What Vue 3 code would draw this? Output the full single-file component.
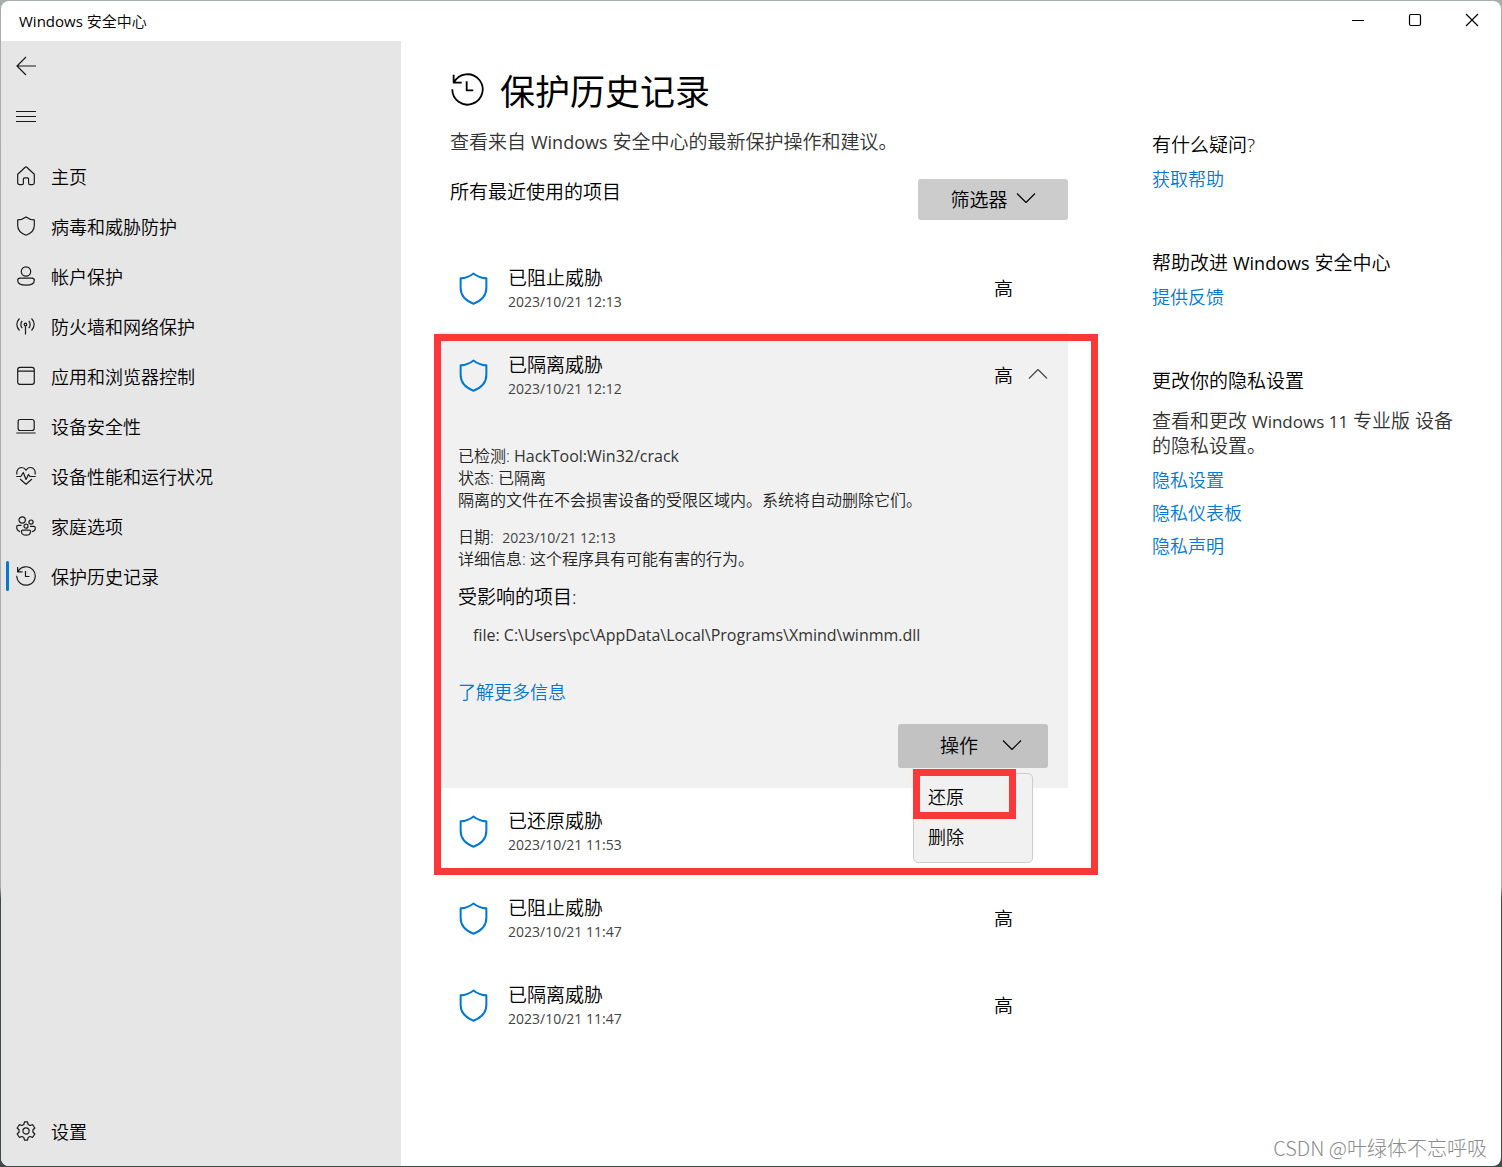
<script setup>
import { ref } from 'vue'

const nav = [
  { icon: 'home', label: '主页' },
  { icon: 'shield', label: '病毒和威胁防护' },
  { icon: 'account', label: '帐户保护' },
  { icon: 'network', label: '防火墙和网络保护' },
  { icon: 'app', label: '应用和浏览器控制' },
  { icon: 'device', label: '设备安全性' },
  { icon: 'health', label: '设备性能和运行状况' },
  { icon: 'family', label: '家庭选项' },
  { icon: 'history', label: '保护历史记录', active: true }
]

const icons = {
  home: 'M1.7 8.2 9.2 1.2Q10 .5 10.8 1.2L18.3 8.2V16.8Q18.3 18.6 16.5 18.6H14Q12.6 18.6 12.6 17.2V13Q12.6 11.8 11.4 11.8H8.6Q7.4 11.8 7.4 13V17.2Q7.4 18.6 6 18.6H3.5Q1.7 18.6 1.7 16.8Z',
  shield: 'M10 .9C12.4 2.7 15.200 3.700 18.300 3.900V9.500C18.300 14 15.500 17.200 10 19.200C4.500 17.200 1.700 14 1.700 9.500V3.900C4.800 3.700 7.600 2.700 10 .9Z',
  account: 'M10 .8A4.700 4.700 0 1 1 10 10.200A4.700 4.700 0 1 1 10 .8ZM4 12.200H16Q18.300 12.200 18.300 14.300C18.300 17.700 14.500 19.200 10 19.200S1.700 17.700 1.700 14.300Q1.700 12.200 4 12.200Z',
  network: 'M9.500 7.200A1.300 1.300 0 1 1 9.500 9.800A1.300 1.300 0 1 1 9.500 7.200ZM9.500 10V18.600M6.200 4.800C4.400 6.800 4.400 10.200 6.200 12.200M12.800 4.800C14.600 6.800 14.600 10.200 12.800 12.200M3.500 2.500C0 6 0 11 3.500 14.500M15.500 2.500C19 6 19 11 15.500 14.500',
  app: 'M4 1.400H16Q18.300 1.400 18.300 3.700V16Q18.300 18.300 16 18.300H4Q1.700 18.300 1.700 16V3.700Q1.700 1.400 4 1.400ZM1.700 5.200H18.300',
  device: 'M4.300 3.500H16Q18.200 3.500 18.200 5.500V12.500Q18.200 14.500 16 14.500H4.300Q2.100 14.500 2.100 12.500V5.500Q2.100 3.500 4.300 3.500ZM.3 17H19.700',
  health: 'M1 8.500C0 4.500 2.500 1.500 5.500 1.500C7.600 1.500 9 2.500 10 4.200C11 2.500 12.400 1.500 14.500 1.500C17.500 1.500 20 4.500 19 8.500M.3 10.500H4.800L7.300 6.500L10 13.500L12.500 8.500L14 10.500H19.700M4 13L10 18.200L16 13',
  family: 'M6.200 .8A3.200 3.200 0 1 1 6.200 7.200A3.200 3.200 0 1 1 6.200 .8ZM15 4A2.100 2.100 0 1 1 15 8.200A2.100 2.100 0 1 1 15 4ZM10 8.200A2 2 0 1 1 10 12.200A2 2 0 1 1 10 8.200ZM5.500 9.400H2.200Q.7 9.400 .7 11C.7 13.700 2 15.200 4.200 15.600M14 10.400H17.700Q19.300 10.400 19.300 12C19.300 14.200 18 15.400 15.800 15.700M6.800 14.200H13.200Q14.500 14.200 14.500 15.400C14.500 18 12.600 19.200 10 19.200S5.500 18 5.500 15.400Q5.500 14.200 6.800 14.200Z',
  history: 'M1.600 1V5.800H6.500M1.900 5.600A9.200 9.200 0 1 1 .8 9.800M9.500 5V10.500H13.500',
  settings: 'M8.500 .8H11.500L12.200 3.500L14 4.500L16.700 3.700L18.800 7L16.900 9V11L18.800 13L16.700 16.300L14 15.500L12.200 16.500L11.500 19.200H8.500L7.800 16.500L6 15.500L3.300 16.300L1.200 13L3.100 11V9L1.200 7L3.300 3.700L6 4.500L7.800 3.500ZM10 6.900A3.100 3.100 0 1 1 10 13.100A3.100 3.100 0 1 1 10 6.900Z'
}

const before = [{ title: '已阻止威胁', time: '2023/10/21 12:13', level: '高' }]
const after = [
  { title: '已阻止威胁', time: '2023/10/21 11:47', level: '高' },
  { title: '已隔离威胁', time: '2023/10/21 11:47', level: '高' }
]
const menuOpen = ref(true)
</script>

<template>
  <div class="desktop">
    <div class="window">
      <header class="titlebar">
        <span class="title"><span class="en">Windows</span> 安全中心</span>
        <div class="controls">
          <button aria-label="最小化"><svg width="14" height="14"><path d="M1 7.500H13" /></svg></button>
          <button aria-label="最大化"><svg width="14" height="14"><rect x="1.500" y="1.500" width="11" height="11" rx="1.500" /></svg></button>
          <button aria-label="关闭"><svg width="14" height="14"><path d="M1 1L13 13M13 1L1 13" /></svg></button>
        </div>
      </header>

      <div class="body">
        <aside class="sidebar">
          <button class="nav-item" aria-label="返回">
            <svg class="icon tool" viewBox="0 0 20 20"><path d="M20 10H1M10 1L1 10L10 19" /></svg>
          </button>
          <button class="nav-item" aria-label="菜单">
            <svg class="icon tool crisp" viewBox="0 0 20 20"><path d="M0 5.500H20M0 10.500H20M0 15.500H20" /></svg>
          </button>
          <nav>
            <a v-for="n in nav" :key="n.icon" href="#" class="nav-item" :class="{ active: n.active }">
              <svg class="icon" viewBox="0 0 20 20"><path :d="icons[n.icon]" /></svg>
              <span>{{ n.label }}</span>
            </a>
          </nav>
          <a href="#" class="nav-item settings">
            <svg class="icon" viewBox="0 0 20 20"><path :d="icons.settings" /></svg>
            <span>设置</span>
          </a>
        </aside>

        <main class="main">
          <section class="content">
            <div class="heading">
              <svg class="heading-icon" viewBox="0 0 20 20"><path :d="icons.history" /></svg>
              <h1>保护历史记录</h1>
            </div>
            <p class="intro">查看来自 <span class="en">Windows</span> 安全中心的最新保护操作和建议。</p>
            <div class="filter-row">
              <h2>所有最近使用的项目</h2>
              <button class="drop filter">
                筛选器<svg class="chevron" viewBox="0 0 20 12"><path d="M1 1.500L10 10.500L19 1.500" /></svg>
              </button>
            </div>

            <div class="list">
              <button v-for="r in before" :key="r.time" class="row">
                <svg class="shield" viewBox="0 0 20 20" preserveAspectRatio="none"><path :d="icons.shield" /></svg>
                <span class="row-text"><span class="row-title">{{ r.title }}</span><span class="time">{{ r.time }}</span></span>
                <span class="level">{{ r.level }}</span>
              </button>

              <div class="group">
                <article class="panel">
                  <button class="row" aria-expanded="true">
                    <svg class="shield" viewBox="0 0 20 20" preserveAspectRatio="none"><path :d="icons.shield" /></svg>
                    <span class="row-text"><span class="row-title">已隔离威胁</span><span class="time">2023/10/21 12:12</span></span>
                    <span class="level">高</span>
                    <svg class="chevron up" viewBox="0 0 20 12"><path d="M1 10.500L10 1.500L19 10.500" /></svg>
                  </button>
                  <div class="details">
                    <p>已检测: <span class="en">HackTool:Win32/crack</span><br>状态: 已隔离<br>隔离的文件在不会损害设备的受限区域内。系统将自动删除它们。</p>
                    <p>日期: &nbsp;<span class="time">2023/10/21 12:13</span><br>详细信息: 这个程序具有可能有害的行为。</p>
                    <h3>受影响的项目:</h3>
                    <p class="file">file: C:\Users\pc\AppData\Local\Programs\Xmind\winmm.dll</p>
                    <a href="#" class="more">了解更多信息</a>
                    <div class="action">
                      <button class="drop act" aria-haspopup="menu" :aria-expanded="menuOpen" @click="menuOpen = !menuOpen">
                        操作<svg class="chevron" viewBox="0 0 20 12"><path d="M1 1.500L10 10.500L19 1.500" /></svg>
                      </button>
                      <div v-if="menuOpen" class="menu" role="menu">
                        <button role="menuitem">还原</button>
                        <button role="menuitem">删除</button>
                        <div class="mark mark-item"></div>
                      </div>
                    </div>
                  </div>
                </article>
                <button class="row">
                  <svg class="shield" viewBox="0 0 20 20" preserveAspectRatio="none"><path :d="icons.shield" /></svg>
                  <span class="row-text"><span class="row-title">已还原威胁</span><span class="time">2023/10/21 11:53</span></span>
                </button>
                <div class="mark mark-group"></div>
              </div>

              <button v-for="r in after" :key="r.title" class="row">
                <svg class="shield" viewBox="0 0 20 20" preserveAspectRatio="none"><path :d="icons.shield" /></svg>
                <span class="row-text"><span class="row-title">{{ r.title }}</span><span class="time">{{ r.time }}</span></span>
                <span class="level">{{ r.level }}</span>
              </button>
            </div>
          </section>

          <aside class="help">
            <section>
              <h2>有什么疑问?</h2>
              <a href="#">获取帮助</a>
            </section>
            <section>
              <h2>帮助改进 <span class="en">Windows</span> 安全中心</h2>
              <a href="#">提供反馈</a>
            </section>
            <section>
              <h2>更改你的隐私设置</h2>
              <p>查看和更改 <span class="en">Windows 11</span> 专业版 设备的隐私设置。</p>
              <a href="#">隐私设置</a>
              <a href="#">隐私仪表板</a>
              <a href="#">隐私声明</a>
            </section>
          </aside>
        </main>
      </div>
      <div class="watermark">CSDN @叶绿体不忘呼吸</div>
    </div>
  </div>
</template>

<style>
body { margin: 0; }
</style>

<style scoped>
* { box-sizing: border-box; }
.desktop {
  min-height: 100vh;
  padding: 1px;
  display: flex;
  background: linear-gradient(#a6afad 0%, #aaaeae 76%, #404b49 77%, #404b49 100%);
  font-family: "Open Sans", "Noto Sans CJK SC", sans-serif;
  font-weight: 350;
  font-size: 19px;
  line-height: 26px;
  color: #000;
}
.window {
  flex: 1;
  min-width: 0;
  display: flex;
  flex-direction: column;
  position: relative;
  background: #fff;
  border-radius: 8px;
  overflow: hidden;
}
h1, h2, h3, p { margin: 0; font-weight: inherit; font-size: inherit; }
button {
  font: inherit;
  color: inherit;
  border: 0;
  padding: 0;
  background: none;
  text-align: left;
}
a { text-decoration: none; color: #0078d4; font-size: 18px; }
svg { flex: none; fill: none; stroke: currentColor; stroke-linejoin: round; }
.en { font-size: 18px; line-height: 16px; font-weight: 400; }

.titlebar {
  height: 40px;
  display: flex;
  align-items: center;
  justify-content: space-between;
  padding-left: 18px;
  font-size: 15px;
}
.titlebar .en { font-size: 15px; }
.controls { display: flex; height: 38px; align-self: flex-start; margin-right: 1px; }
.controls button { width: 57px; display: flex; align-items: center; justify-content: center; }
.controls svg { stroke-width: 1.2; }

.body { flex: 1; display: flex; }
.sidebar {
  width: 400px;
  flex: none;
  background: #e6e6e6;
  display: flex;
  flex-direction: column;
  padding-bottom: 9px;
}
nav { margin-top: 11px; }
.nav-item {
  height: 50px;
  display: flex;
  align-items: center;
  gap: 15px;
  padding-left: 15px;
  font-size: 18px;
  color: #000;
  position: relative;
}
.active::before {
  content: "";
  position: absolute;
  left: 5px;
  top: 9px;
  width: 3px;
  height: 30px;
  border-radius: 2px;
  background: #0078d4;
}
.icon { width: 20px; height: 20px; margin-bottom: 2px; stroke-width: 1.2; color: #1a1a1a; }
.tool { margin-bottom: 0; }
.crisp { stroke-width: 1; }
.settings { margin-top: auto; }

.main {
  flex: 1;
  min-width: 0;
  display: grid;
  grid-template-columns: minmax(0, 1fr) 309px;
  column-gap: 84px;
  padding: 26px 40px 40px 38px;
  align-items: start;
}
.heading { display: flex; align-items: center; gap: 16px; height: 50px; padding-left: 12px; }
.heading-icon { width: 33px; height: 33px; margin-bottom: 5px; stroke-width: 1.1; }
h1 { font-size: 35px; line-height: 50px; font-weight: 400; }
.intro { margin-top: 12px; padding-left: 11px; color: #333; }
.filter-row {
  margin-top: 24px;
  padding-left: 11px;
  display: flex;
  align-items: flex-start;
  justify-content: space-between;
}
.drop {
  width: 150px;
  display: flex;
  align-items: center;
  justify-content: center;
  border-radius: 3px;
}
.chevron { width: 20px; height: 12px; margin-bottom: 3px; stroke-width: 1.1; }
.filter { height: 41px; gap: 8px; background: #ccc; }

.list { margin-top: 25px; }
.row {
  width: 100%;
  height: 87px;
  display: flex;
  align-items: center;
  padding: 0 20px 0 19px;
}
.shield { width: 31px; height: 33px; color: #0078d4; stroke-width: 1.3; }
.row-text { flex: 1; display: flex; flex-direction: column; margin-left: 19px; padding-top: 3px; }
.row-title { line-height: 24px; }
.row-text .time { line-height: 24px; }
.time { font-size: 14px; line-height: 16px; font-weight: 400; color: #444; }
.level { width: 54px; }
.level + .chevron { margin-left: -20px; color: #444; }

.group { position: relative; }
.panel { background: #f1f1f1; }
.details {
  padding: 26px 20px 20px 19px;
  display: flex;
  flex-direction: column;
  align-items: flex-start;
  font-size: 16px;
  line-height: 22px;
  color: #222;
}
.details p + p { margin-top: 15px; }
.details .en { font-size: 16px; color: #333; }
.details h3 { margin-top: 14px; font-size: 19px; line-height: 26px; color: #000; }
.details .file { margin-top: 14px; padding-left: 15px; font-weight: 400; color: #333; }
.more { margin-top: 33px; line-height: 26px; }
.action { position: relative; align-self: flex-end; margin-top: 19px; font-size: 19px; color: #000; }
.act { height: 44px; gap: 24px; padding-left: 16px; background: #c2c2c2; }
.menu {
  position: absolute;
  z-index: 2;
  left: 15px;
  top: 49px;
  width: 120px;
  padding: 3px 0 5px;
  background: #f1f1f1;
  border: 1px solid #ccc;
  border-radius: 5px;
}
.menu button { display: block; width: 100%; height: 40px; padding-left: 14px; font-size: 18px; }
.mark { position: absolute; border: 7px solid #fb3838; pointer-events: none; }
.mark-group { top: 2px; left: -5px; right: -30px; bottom: 0; }
.mark-item { top: -5px; left: -1px; width: 103px; height: 50px; }

.help { padding-top: 65px; }
.help section + section { margin-top: 58px; }
.help a { display: block; margin-top: 7px; }
.help h2 + a, .help p + a { margin-top: 8px; }
.help p { margin-top: 15px; line-height: 25px; color: #333; }
.help p .en { font-size: 17px; }

.watermark {
  position: absolute;
  right: 14px;
  bottom: 5px;
  font: 300 20px/26px "Noto Sans CJK SC", sans-serif;
  color: #8c8c8c;
}
</style>
